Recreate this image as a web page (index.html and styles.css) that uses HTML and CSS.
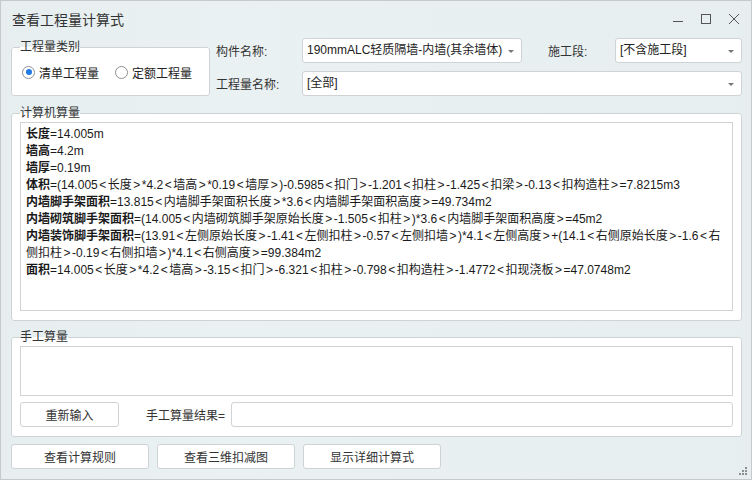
FILE: index.html
```html
<!DOCTYPE html>
<html lang="zh-CN">
<head>
<meta charset="utf-8">
<title>查看工程量计算式</title>
<link rel="stylesheet" href="styles.css">
</head>
<body>
<div class="window">
  <div class="titlebar">
    <span class="title">查看工程量计算式</span>
    <svg class="controls" width="70" height="14" viewBox="0 0 70 14">
      <line x1="2" y1="8.5" x2="12" y2="8.5" stroke="#555" stroke-width="1"/>
      <rect x="30.5" y="1.5" width="9" height="9" fill="none" stroke="#555" stroke-width="1"/>
      <line x1="58" y1="1" x2="68" y2="11" stroke="#555" stroke-width="1"/>
      <line x1="68" y1="1" x2="58" y2="11" stroke="#555" stroke-width="1"/>
    </svg>
  </div>

  <div class="top">
    <fieldset class="group type-group">
      <legend>工程量类别</legend>
      <div class="radios">
        <span class="radio checked"></span><span class="radio-text">清单工程量</span>
        <span class="radio second"></span><span class="radio-text">定额工程量</span>
      </div>
    </fieldset>
    <div class="fields">
      <div class="field-row">
        <span class="lbl">构件名称:</span>
        <div class="select sel-comp">190mmALC轻质隔墙-内墙(其余墙体)<i class="arrow"></i></div>
        <span class="lbl lbl-stage">施工段:</span>
        <div class="select sel-stage">[不含施工段]<i class="arrow"></i></div>
      </div>
      <div class="field-row">
        <span class="lbl">工程量名称:</span>
        <div class="select sel-name">[全部]<i class="arrow"></i></div>
      </div>
    </div>
  </div>

  <fieldset class="group calc-group">
    <legend>计算机算量</legend>
    <div class="output">
      <div class="line"><b>长度</b>=14.005m</div>
      <div class="line"><b>墙高</b>=4.2m</div>
      <div class="line"><b>墙厚</b>=0.19m</div>
      <div class="line"><b>体积</b>=(14.005<span class="ab">&lt;</span>长度<span class="ab">&gt;</span>*4.2<span class="ab">&lt;</span>墙高<span class="ab">&gt;</span>*0.19<span class="ab">&lt;</span>墙厚<span class="ab">&gt;</span>)-0.5985<span class="ab">&lt;</span>扣门<span class="ab">&gt;</span>-1.201<span class="ab">&lt;</span>扣柱<span class="ab">&gt;</span>-1.425<span class="ab">&lt;</span>扣梁<span class="ab">&gt;</span>-0.13<span class="ab">&lt;</span>扣构造柱<span class="ab">&gt;</span>=7.8215m3</div>
      <div class="line"><b>内墙脚手架面积</b>=13.815<span class="ab">&lt;</span>内墙脚手架面积长度<span class="ab">&gt;</span>*3.6<span class="ab">&lt;</span>内墙脚手架面积高度<span class="ab">&gt;</span>=49.734m2</div>
      <div class="line"><b>内墙砌筑脚手架面积</b>=(14.005<span class="ab">&lt;</span>内墙砌筑脚手架原始长度<span class="ab">&gt;</span>-1.505<span class="ab">&lt;</span>扣柱<span class="ab">&gt;</span>)*3.6<span class="ab">&lt;</span>内墙脚手架面积高度<span class="ab">&gt;</span>=45m2</div>
      <div class="line"><b>内墙装饰脚手架面积</b>=(13.91<span class="ab">&lt;</span>左侧原始长度<span class="ab">&gt;</span>-1.41<span class="ab">&lt;</span>左侧扣柱<span class="ab">&gt;</span>-0.57<span class="ab">&lt;</span>左侧扣墙<span class="ab">&gt;</span>)*4.1<span class="ab">&lt;</span>左侧高度<span class="ab">&gt;</span>+(14.1<span class="ab">&lt;</span>右侧原始长度<span class="ab">&gt;</span>-1.6<span class="ab">&lt;</span>右</div>
      <div class="line">侧扣柱<span class="ab">&gt;</span>-0.19<span class="ab">&lt;</span>右侧扣墙<span class="ab">&gt;</span>)*4.1<span class="ab">&lt;</span>右侧高度<span class="ab">&gt;</span>=99.384m2</div>
      <div class="line"><b>面积</b>=14.005<span class="ab">&lt;</span>长度<span class="ab">&gt;</span>*4.2<span class="ab">&lt;</span>墙高<span class="ab">&gt;</span>-3.15<span class="ab">&lt;</span>扣门<span class="ab">&gt;</span>-6.321<span class="ab">&lt;</span>扣柱<span class="ab">&gt;</span>-0.798<span class="ab">&lt;</span>扣构造柱<span class="ab">&gt;</span>-1.4772<span class="ab">&lt;</span>扣现浇板<span class="ab">&gt;</span>=47.0748m2</div>
    </div>
  </fieldset>

  <fieldset class="group manual-group">
    <legend>手工算量</legend>
    <div class="manual-input"></div>
    <div class="manual-row">
      <button class="btn btn-reset">重新输入</button>
      <span class="result-label">手工算量结果=</span>
      <div class="result-box"></div>
    </div>
  </fieldset>

  <div class="actions">
    <button class="btn btn-action">查看计算规则</button>
    <button class="btn btn-action">查看三维扣减图</button>
    <button class="btn btn-action">显示详细计算式</button>
  </div>

  <svg class="grip" width="9" height="9" viewBox="0 0 9 9">
    <rect x="6" y="0" width="2" height="2" fill="#8a8f92"/>
    <rect x="3" y="3" width="2" height="2" fill="#8a8f92"/>
    <rect x="6" y="3" width="2" height="2" fill="#8a8f92"/>
    <rect x="0" y="6" width="2" height="2" fill="#8a8f92"/>
    <rect x="3" y="6" width="2" height="2" fill="#8a8f92"/>
    <rect x="6" y="6" width="2" height="2" fill="#8a8f92"/>
  </svg>
</div>
</body>
</html>
```

FILE: styles.css
```css
* { box-sizing: border-box; }

html, body {
  margin: 0;
  padding: 0;
  background: #e8eff1;
}

body {
  font-family: "Liberation Sans", "Noto Sans CJK SC", sans-serif;
  font-size: 12px;
  color: #333;
}

.window {
  position: relative;
  width: 752px;
  height: 480px;
  border: 1px solid #c6cacc;
  background: linear-gradient(90deg, #e6eef0 0%, #eaf1f2 30%, #e7eef0 100%);
  padding: 0 9px 0 10px;
  overflow: hidden;
}

.titlebar {
  height: 37px;
  display: flex;
  align-items: center;
  justify-content: space-between;
  margin: 0 -9px 0 -10px;
  padding: 0 10px 0 11px;
}

.title {
  font-size: 14px;
  color: #333;
  line-height: 20px;
}

.controls {
  display: block;
  margin-top: 1px;
}

.top {
  display: flex;
  align-items: flex-start;
}

.group {
  margin: 0;
  border: 1px solid #cfd3d5;
  border-radius: 3px;
  background: #fff;
  padding: 0 8px;
  min-width: 0;
}

.group legend {
  padding: 0;
  font-size: 12px;
  line-height: 16px;
  color: #333;
}

.type-group {
  width: 199px;
  margin-top: 1px;
  padding-bottom: 6px;
}

.radios {
  height: 34px;
  display: flex;
  align-items: center;
  padding-left: 2px;
}

.radio {
  width: 13px;
  height: 13px;
  border: 1px solid #8d9295;
  border-radius: 50%;
  background: #fff;
  position: relative;
  flex: none;
}

.radio.checked::after {
  content: "";
  position: absolute;
  left: 2.5px;
  top: 2.5px;
  width: 6px;
  height: 6px;
  border-radius: 50%;
  background: #1f7ae8;
}

.radio.second {
  margin-left: 16px;
}

.radio-text {
  margin-left: 4px;
  font-size: 12px;
  color: #222;
}

.fields {
  margin-left: 6px;
  display: flex;
  flex-direction: column;
  gap: 8px;
}

.field-row {
  display: flex;
  align-items: center;
  height: 25px;
}

.lbl {
  width: 86px;
  flex: none;
  color: #333;
}

.lbl-stage {
  width: 67px;
  margin-left: 26px;
}

.select {
  position: relative;
  height: 25px;
  line-height: 23px;
  border: 1px solid #cfd3d5;
  border-radius: 3px;
  background: #fff;
  padding-left: 4px;
  color: #222;
  white-space: nowrap;
  overflow: hidden;
}

.sel-comp { width: 220px; }
.sel-stage { width: 127px; }
.sel-name { width: 440px; }

.arrow {
  position: absolute;
  right: 7px;
  top: 11px;
  width: 0;
  height: 0;
  border-left: 3px solid transparent;
  border-right: 3px solid transparent;
  border-top: 3px solid #777;
}

.calc-group {
  margin-top: 9px;
  width: 731px;
  padding-top: 1px;
  padding-bottom: 9px;
}

.output {
  height: 189px;
  border: 1px solid #cfd3d5;
  padding: 3px 5px;
  overflow: hidden;
  font-size: 12px;
  color: #1a1a1a;
}

.line {
  line-height: 17px;
  white-space: nowrap;
}

.line b {
  font-weight: 700;
}

.ab {
  padding: 0 1.5px;
}

.manual-group {
  margin-top: 8px;
  width: 731px;
  padding-top: 1px;
  padding-bottom: 9px;
}

.manual-input {
  height: 50px;
  border: 1px solid #cfd3d5;
}

.manual-row {
  margin-top: 6px;
  display: flex;
  align-items: center;
  height: 25px;
}

.btn {
  font-family: "Liberation Sans", "Noto Sans CJK SC", sans-serif;
  font-size: 12px;
  color: #333;
  background: #fff;
  border: 1px solid #cfd3d5;
  border-radius: 3px;
  height: 25px;
  padding: 0;
  margin: 0;
}

.btn-reset {
  width: 99px;
}

.result-label {
  margin-left: 27px;
  color: #333;
}

.result-box {
  flex: 1;
  margin-left: 6px;
  height: 25px;
  border: 1px solid #cfd3d5;
  border-radius: 3px;
  background: #fff;
}

.actions {
  margin-top: 7px;
  display: flex;
  gap: 8px;
}

.btn-action {
  width: 138px;
}

.grip {
  position: absolute;
  right: 3px;
  bottom: 3px;
}
```
